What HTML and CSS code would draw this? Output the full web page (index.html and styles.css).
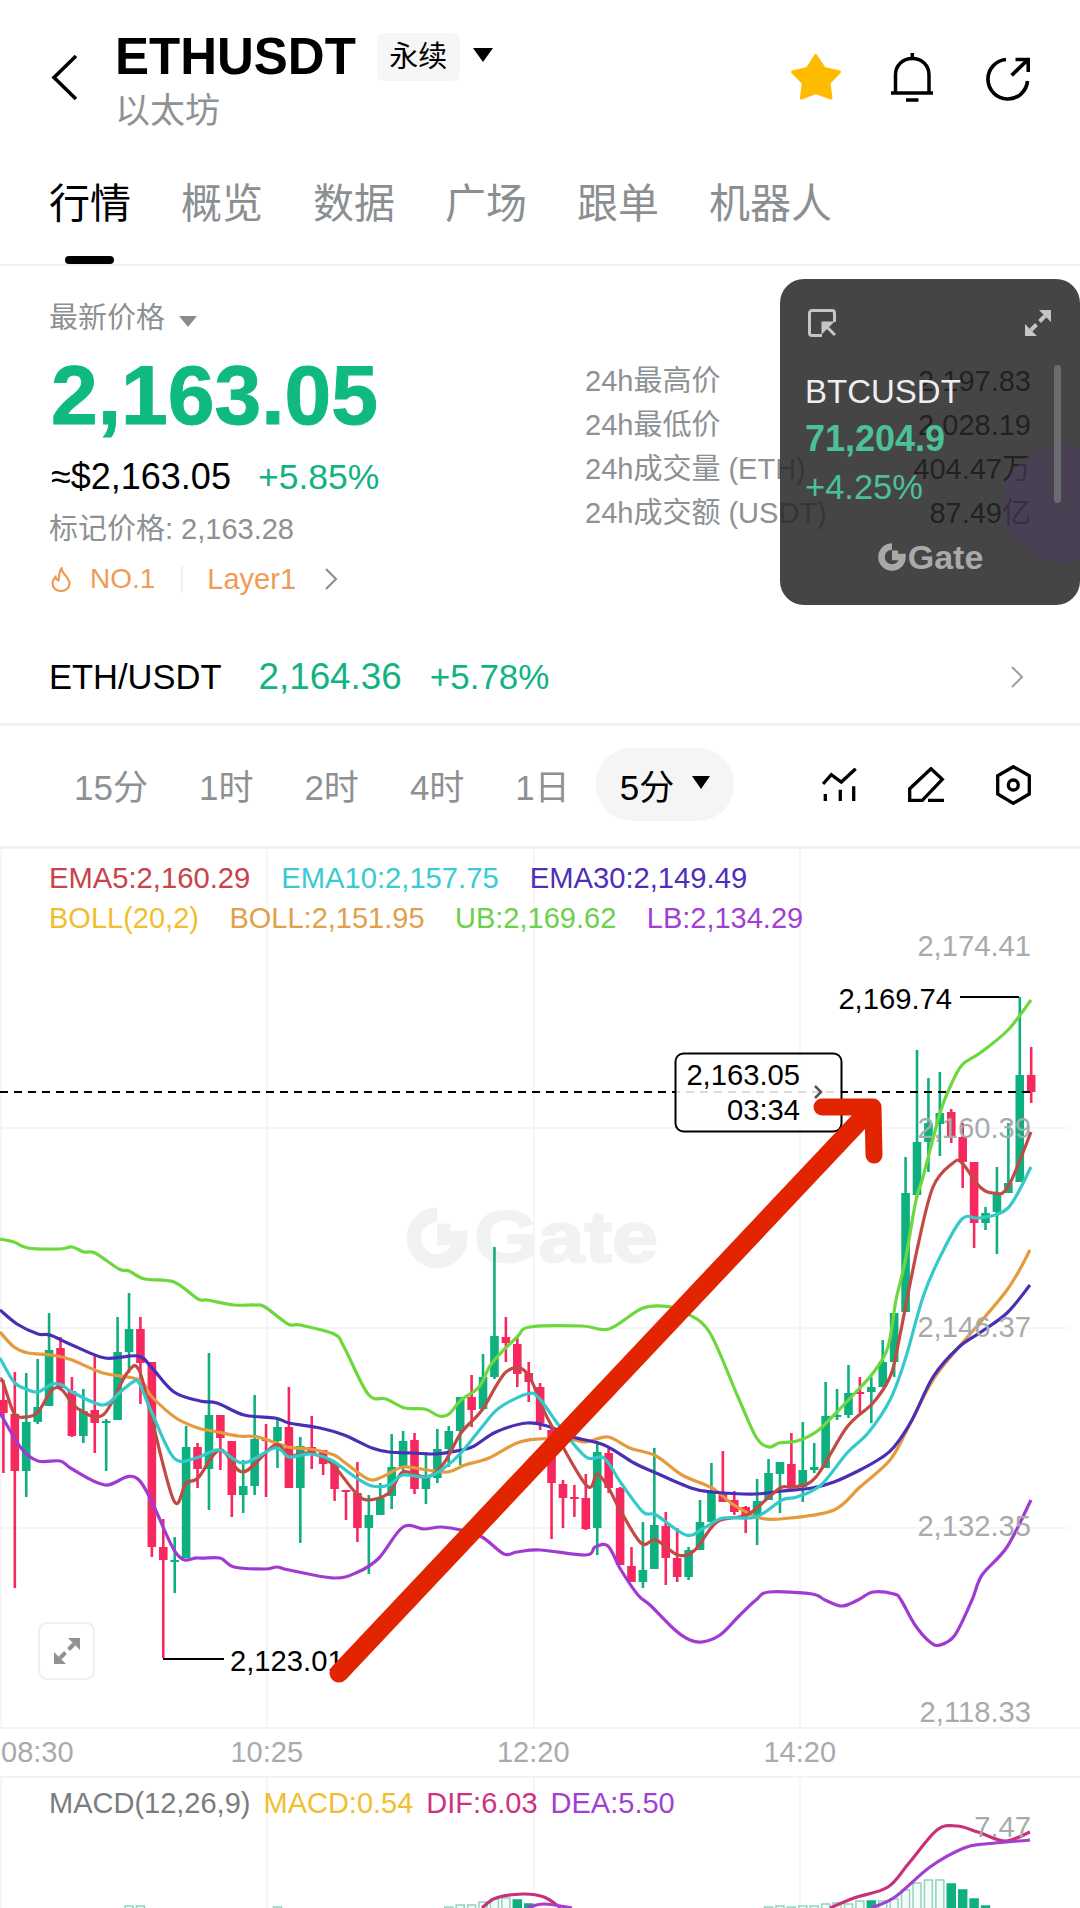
FILE: index.html
```html
<!DOCTYPE html>
<html lang="zh">
<head>
  <meta charset="UTF-8">
  <title>ETHUSDT 永续</title>
  <link rel="stylesheet" href="styles.css">
</head>
<body>

  <svg class="defs" width="0" height="0">
    <symbol id="expand" viewBox="0 0 28 28">
      <path d="M15 1H27V13Z M1 15V27H13Z" fill="currentColor"/>
      <path d="M21 7L15.5 12.5 M7 21L12.5 15.5" stroke="currentColor" stroke-width="4" fill="none"/>
    </symbol>
    <symbol id="gate-mark" viewBox="0 0 56 56">
      <path d="M28 7A21 21 0 1 0 49 28H28" fill="none" stroke="currentColor" stroke-width="13"/>
      <rect x="28" y="15" width="12" height="13" fill="currentColor"/>
    </symbol>
  </svg>

  <!-- Header -->
  <div class="header">
    <svg class="back" viewBox="0 0 30 70"><polyline points="27,23 5,44.5 27,66"/></svg>
    <div class="title">
      <div class="title-row">
        <span class="symbol">ETHUSDT</span>
        <span class="badge">永续</span>
        <span class="caret"></span>
      </div>
      <div class="subtitle">以太坊</div>
    </div>
    <div class="actions">
      <svg class="star" viewBox="0 0 52 49"><polygon points="25.7,2.5 34.3,15.5 49.5,19 39,30 41,45 25.7,39.5 11.5,45 13.3,30 2.5,19 17.3,15.5"/></svg>
      <svg class="bell" viewBox="0 0 42 49">
        <path d="M4.5 40V22C4.5 12 12 5.5 21.3 5.5S38 12 38 22V40"/>
        <path d="M0 40H42M21.3 0V5M15 47H27.5"/>
      </svg>
      <svg class="share" viewBox="0 0 44 44">
        <path d="M20 2.5A19.8 19.8 0 1 0 41.5 24"/>
        <path d="M25.7 18.3L41.5 3M29.5 2.5H42.3V15"/>
      </svg>
    </div>
  </div>

  <!-- Tabs -->
  <div class="tabs">
    <div class="tab active">行情</div>
    <div class="tab">概览</div>
    <div class="tab">数据</div>
    <div class="tab">广场</div>
    <div class="tab">跟单</div>
    <div class="tab">机器人</div>
  </div>

  <!-- Price summary -->
  <div class="summary">
    <div class="price-col">
      <div class="price-label">最新价格 <span class="caret small"></span></div>
      <div class="price">2,163.05</div>
      <div class="fiat-row"><span class="fiat">≈$2,163.05</span><span class="up">+5.85%</span></div>
      <div class="mark">标记价格: 2,163.28</div>
      <div class="tags">
        <svg class="flame" viewBox="0 0 20 25"><path d="M10.5 1.5C11 7 18.5 10 18.5 16.5A8.5 7.5 0 0 1 1.5 16.5C1.5 13.5 3 11.5 4.5 10C5 12 6 13 7.5 13.500C8 9 8 5 10.500 1.500Z"/></svg>
        <span class="tag">NO.1</span>
        <span class="tag-sep"></span>
        <span class="tag">Layer1</span>
        <svg class="tag-arrow" viewBox="0 0 14 22"><polyline points="2,1 12,11 2,21"/></svg>
      </div>
    </div>
    <div class="stats">
      <div class="stat"><span class="stat-name">24h最高价</span><span class="stat-val">2,197.83</span></div>
      <div class="stat"><span class="stat-name">24h最低价</span><span class="stat-val">2,028.19</span></div>
      <div class="stat"><span class="stat-name">24h成交量 (ETH)</span><span class="stat-val">404.47万</span></div>
      <div class="stat"><span class="stat-name">24h成交额 (USDT)</span><span class="stat-val">87.49亿</span></div>
    </div>

    <!-- Floating mini window -->
    <div class="float-win">
      <div class="float-blob"></div>
      <div class="float-bar"></div>
      <div class="float-icons">
        <svg class="float-icon" viewBox="0 0 28 28">
          <path d="M14 26.500H4A2.500 2.500 0 0 1 1.500 24V4A2.500 2.500 0 0 1 4 1.500H24A2.500 2.500 0 0 1 26.500 4V13" fill="none" stroke="currentColor" stroke-width="3"/>
          <path d="M15 14H23L15 22Z M17 16L27 26" fill="currentColor" stroke="currentColor" stroke-width="3"/>
        </svg>
        <svg class="float-icon"><use href="#expand"/></svg>
      </div>
      <div class="float-sym">BTCUSDT</div>
      <div class="float-price">71,204.9</div>
      <div class="float-chg">+4.25%</div>
      <div class="float-logo">
        <svg class="float-mark"><use href="#gate-mark"/></svg>
        <span>Gate</span>
      </div>
    </div>
  </div>

  <!-- Spot row -->
  <div class="spot">
    <span class="spot-name">ETH/USDT</span>
    <span class="spot-price">2,164.36</span>
    <span class="spot-chg">+5.78%</span>
    <svg class="spot-arrow" viewBox="0 0 14 22"><polyline points="2,1 12,11 2,21"/></svg>
  </div>

  <!-- Period selector -->
  <div class="periods">
    <div class="period">15分</div>
    <div class="period">1时</div>
    <div class="period">2时</div>
    <div class="period">4时</div>
    <div class="period">1日</div>
    <div class="period current">5分<span class="caret"></span></div>
    <div class="tools">
      <svg class="tool t1" viewBox="0 0 36 34">
        <path d="M1 16L9.300 6.700 19.300 14 33.700 .7M3.300 26V33M18.300 21.700V33M31.700 18.300V33"/>
      </svg>
      <svg class="tool t2" viewBox="0 0 37 35">
        <path d="M1.700 33.300V21.700L23 1.700 34.300 12.300 14.300 33.300ZM20 33.300H36"/>
      </svg>
      <svg class="tool t3" viewBox="0 0 35 40">
        <polygon points="17.300,1.700 33.300,10.700 33.300,29 17.300,38.300 1.700,29 1.700,10.700"/>
        <circle cx="17.300" cy="20" r="5"/>
      </svg>
    </div>
  </div>

  <!-- Candle chart -->
  <div class="chart">
    <svg class="chart-svg" viewBox="0 849 1080 878">
      <g class="watermark">
        <use href="#gate-mark" x="406" y="1207" width="62" height="62"/>
        <text x="474" y="1262" class="watermark-text" textLength="184" lengthAdjust="spacingAndGlyphs">Gate</text>
      </g>
      <path class="grid" d="M1 849V1727M267 849V1727M534 849V1727M800 849V1727M0 1128H1068M0 1328H1068M0 1528H1068"/>
      <g id="candles"></g>
      <g id="lines"></g>
      <path class="low-lead" d="M163 1659H224"/>
      <text x="230" y="1671" class="tag-black">2,123.01</text>
      <path class="low-lead" d="M960 997H1019"/>
      <text x="952" y="1009" class="tag-black end">2,169.74</text>
      <text x="1031" y="956" class="axis end">2,174.41</text>
      <text x="1031" y="1138" class="axis end">2,160.39</text>
      <text x="1031" y="1337" class="axis end">2,146.37</text>
      <text x="1031" y="1536" class="axis end">2,132.35</text>
      <text x="1031" y="1722" class="axis end">2,118.33</text>
      <path class="last-line" d="M0 1092H1031"/>
      <rect x="675.500" y="1053.500" width="166" height="78" rx="8" class="price-box"/>
      <text x="800" y="1085" class="tag-black end">2,163.05</text>
      <text x="800" y="1120" class="tag-black end">03:34</text>
      <polyline points="815,1086 821,1092 815,1098" class="box-arrow"/>
      <path class="arrow" d="M339 1673L868 1112"/>
      <path class="arrow-head" d="M822 1107H873L874 1155"/>
    </svg>
    <div class="legend">
      <div class="legend-row">
        <span class="c-ema5">EMA5:2,160.29</span>
        <span class="c-ema10">EMA10:2,157.75</span>
        <span class="c-ema30">EMA30:2,149.49</span>
      </div>
      <div class="legend-row second">
        <span class="c-yellow">BOLL(20,2)</span>
        <span class="c-boll">BOLL:2,151.95</span>
        <span class="c-ub">UB:2,169.62</span>
        <span class="c-lb">LB:2,134.29</span>
      </div>
    </div>
    <div class="full-btn"><svg class="full-icon"><use href="#expand"/></svg></div>
  </div>

  <!-- Time axis -->
  <div class="times">
    <span class="first">08:30</span>
    <span>10:25</span>
    <span>12:20</span>
    <span>14:20</span>
  </div>

  <!-- MACD -->
  <div class="macd">
    <svg class="chart-svg" viewBox="0 1778 1080 130">
      <path class="grid" d="M1 1778V1908M267 1778V1908M534 1778V1908M800 1778V1908"/>
      <g id="hist"></g>
      <g id="macd-lines"></g>
      <text x="1031" y="1837" class="axis end">7.47</text>
    </svg>
    <div class="macd-legend">
      <span class="c-gray">MACD(12,26,9)</span>
      <span class="c-yellow">MACD:0.54</span>
      <span class="c-dif">DIF:6.03</span>
      <span class="c-lb">DEA:5.50</span>
    </div>
  </div>

  <script src="script.js"></script>
</body>
</html>
```

FILE: styles.css
```css
* {
  box-sizing: border-box;
}

body {
  margin: 0;
  width: 1080px;
  height: 1908px;
  overflow: hidden;
  background: #fff;
  color: #000;
  font-family: "Liberation Sans", "Noto Sans CJK SC", sans-serif;
}

.defs {
  position: absolute;
}

.caret {
  display: inline-block;
  width: 0;
  height: 0;
  border-left: 10px solid transparent;
  border-right: 10px solid transparent;
  border-top: 14px solid #000;
}

.caret.small {
  border-left-width: 9px;
  border-right-width: 9px;
  border-top: 11px solid #888c8f;
  margin-left: 6px;
  vertical-align: 1px;
}

/* header */
.header {
  display: flex;
  align-items: flex-start;
  padding: 33px 50px 0 49px;
  height: 131px;
}

.back {
  width: 30px;
  height: 70px;
  margin-right: 36px;
  fill: none;
  stroke: #000;
  stroke-width: 3.6;
}

.title-row {
  display: flex;
  align-items: center;
  height: 48px;
}

.symbol {
  font-size: 51px;
  font-weight: bold;
  line-height: 48px;
}

.badge {
  margin-left: 21px;
  width: 83px;
  height: 48px;
  line-height: 48px;
  text-align: center;
  font-size: 29px;
  background: #f6f6f6;
  border-radius: 6px;
}

.title-row .caret {
  margin-left: 13px;
  margin-bottom: 4px;
}

.subtitle {
  margin-top: 10px;
  line-height: 40px;
  font-size: 35px;
  color: #8e9295;
}

.actions {
  display: flex;
  margin-left: auto;
  margin-top: 20px;
}

.star {
  width: 52px;
  height: 49px;
  fill: #ffbb00;
  stroke: #ffbb00;
  stroke-width: 3;
  stroke-linejoin: round;
}

.bell {
  width: 42px;
  height: 49px;
  margin-left: 49px;
  fill: none;
  stroke: #000;
  stroke-width: 3.5;
}

.share {
  width: 44px;
  height: 44px;
  margin-left: 53px;
  margin-top: 4px;
  fill: none;
  stroke: #000;
  stroke-width: 3.7;
}

/* tabs */
.tabs {
  position: relative;
  display: flex;
  gap: 50px;
  height: 135px;
  padding: 51px 49px 0;
  border-bottom: 2px solid #f3f3f3;
}

.tab {
  font-size: 41px;
  line-height: 44px;
  color: #8b8f92;
}

.tab.active {
  color: #000;
}

.tab.active::after {
  content: "";
  position: absolute;
  left: 65px;
  bottom: 0;
  width: 49px;
  height: 8px;
  border-radius: 4px;
  background: #000;
}

/* summary */
.summary {
  position: relative;
  display: flex;
  height: 365px;
  padding-left: 49px;
}

.price-col {
  width: 536px;
  padding-top: 34px;
}

.price-label {
  line-height: 36px;
  font-size: 29px;
  color: #8d9194;
}

.price {
  margin-top: 17px;
  margin-left: 2px;
  font-size: 84px;
  line-height: 84px;
  font-weight: bold;
  color: #10b981;
  -webkit-text-stroke: 1px #10b981;
}

.fiat-row {
  display: flex;
  gap: 27px;
  margin-top: 20px;
  margin-left: 2px;
  font-size: 36px;
  line-height: 40px;
}

.up {
  font-size: 35.500px;
  color: #12b283;
}

.mark {
  margin-top: 14px;
  line-height: 36px;
  font-size: 29px;
  color: #8d9194;
}

.tags {
  display: flex;
  align-items: center;
  height: 36px;
  margin-top: 14px;
  margin-left: 2px;
}

.flame {
  width: 20px;
  height: 25px;
  fill: none;
  stroke: #ee9b57;
  stroke-width: 2.2;
}

.tag {
  margin-left: 19px;
  font-size: 28px;
  color: #ee9b57;
}

.tag + .tag-sep + .tag {
  font-size: 29px;
}

.tag-sep {
  width: 2px;
  height: 27px;
  margin-left: 26px;
  margin-right: 5px;
  background: #f0f0f0;
}

.tag-arrow {
  width: 14px;
  height: 22px;
  margin-left: 28px;
  fill: none;
  stroke: #8d9194;
  stroke-width: 2.2;
}

.stats {
  width: 446px;
  padding-top: 93px;
}

.stat {
  display: flex;
  justify-content: space-between;
  height: 44px;
  line-height: 44px;
  font-size: 29px;
}

.stat-name {
  color: #8d9194;
}

.stat-val {
  color: #000;
}

/* floating window */
.float-win {
  position: absolute;
  top: 13px;
  right: 0;
  width: 300px;
  height: 326px;
  padding: 30px 28px 0 25px;
  border-radius: 24px;
  overflow: hidden;
  background: rgba(38, 39, 40, 0.86);
  color: #eee;
}

.float-blob {
  position: absolute;
  top: 166px;
  right: -44px;
  width: 122px;
  height: 118px;
  border-radius: 50%;
  background: rgba(78, 62, 96, 0.5);
}

.float-bar {
  position: absolute;
  top: 86px;
  left: 274px;
  width: 7px;
  height: 138px;
  border-radius: 4px;
  background: #6b6c6e;
}

.float-icons {
  display: flex;
  justify-content: space-between;
  height: 28px;
  padding-left: 3px;
}

.float-icon {
  width: 28px;
  height: 28px;
  color: #c4c5c5;
}

.float-sym {
  margin-top: 36px;
  font-size: 33px;
  line-height: 38px;
}

.float-price {
  margin-top: 8px;
  font-size: 36px;
  font-weight: bold;
  line-height: 40px;
  color: #4cc096;
}

.float-chg {
  margin-top: 8px;
  font-size: 34.5px;
  line-height: 40px;
  color: #4cc096;
}

.float-logo {
  display: flex;
  align-items: center;
  justify-content: center;
  gap: 2px;
  height: 28px;
  margin-top: 36px;
  margin-left: 4px;
  font-size: 34px;
  font-weight: bold;
  color: #a9a9a9;
}

.float-mark {
  width: 28px;
  height: 28px;
}

/* spot */
.spot {
  display: flex;
  align-items: center;
  height: 95px;
  padding: 0 56px 0 49px;
  border-bottom: 3px solid #f3f3f3;
}

.spot-name {
  font-size: 34.500px;
}

.spot-price {
  margin-left: 37px;
  font-size: 36.800px;
  color: #12b283;
}

.spot-chg {
  margin-left: 28px;
  font-size: 35px;
  color: #12b283;
}

.spot-arrow {
  width: 14px;
  height: 22px;
  margin-left: auto;
  fill: none;
  stroke: #9ea2a4;
  stroke-width: 2.2;
}

/* periods */
.periods {
  display: flex;
  align-items: center;
  gap: 51px;
  height: 123px;
  padding: 0 49px 3px 74px;
  border-bottom: 3px solid #f3f3f3;
}

.period {
  font-size: 35px;
  color: #8d9194;
}

.period.current {
  display: flex;
  align-items: center;
  gap: 18px;
  height: 73px;
  margin-left: -25px;
  padding: 0 24px;
  border-radius: 36px;
  background: #f5f5f5;
  color: #000;
}

.period.current .caret {
  border-left-width: 9px;
  border-right-width: 9px;
  border-top-width: 13px;
  margin-bottom: 4px;
}

.tools {
  display: flex;
  align-items: center;
  margin-left: auto;
}

.tool {
  fill: none;
  stroke: #000;
  stroke-width: 3.3;
}

.t1 {
  width: 36px;
  height: 34px;
}

.t2 {
  width: 37px;
  height: 35px;
  margin-left: 50px;
}

.t3 {
  width: 35px;
  height: 40px;
  margin-left: 51px;
}

/* chart */
.chart {
  position: relative;
  height: 878px;
  padding-top: 11px;
}

.chart-svg {
  position: absolute;
  left: 0;
  top: 0;
  width: 100%;
  height: 100%;
}

.chart-svg text {
  font-family: "Liberation Sans", sans-serif;
}

.grid {
  fill: none;
  stroke: #f3f4f4;
  stroke-width: 1.5;
}

.watermark {
  color: #f1f3f3;
}

.watermark-text {
  font-size: 72px;
  font-weight: bold;
  fill: #f1f3f3;
  stroke: #f1f3f3;
  stroke-width: 2;
}

.axis {
  font-size: 29.200px;
  fill: #a8abad;
}

.tag-black {
  font-size: 29.200px;
  fill: #000;
}

.end {
  text-anchor: end;
}

.low-lead {
  fill: none;
  stroke: #000;
  stroke-width: 2;
}

.last-line {
  fill: none;
  stroke: #000;
  stroke-width: 2;
  stroke-dasharray: 8 6;
}

.price-box {
  fill: rgba(255, 255, 255, 0.85);
  stroke: #000;
  stroke-width: 2;
}

.box-arrow {
  fill: none;
  stroke: #555;
  stroke-width: 2.5;
}

.arrow {
  fill: none;
  stroke: #e22400;
  stroke-width: 19;
  stroke-linecap: round;
}

.arrow-head {
  fill: none;
  stroke: #e22400;
  stroke-width: 17;
  stroke-linecap: round;
  stroke-linejoin: round;
}

.legend {
  position: relative;
}

.legend-row {
  display: flex;
  gap: 31px;
  padding-left: 49px;
  margin-bottom: 3.500px;
  font-size: 29.200px;
  line-height: 36px;
}

.legend-row.second {
  gap: 30.500px;
  font-size: 29px;
}

.c-ema5 { color: #c9434b; }
.c-ema10 { color: #38cbd1; }
.c-ema30 { color: #4f2fb8; }
.c-yellow { color: #f0be2e; }
.c-boll { color: #e2a04a; }
.c-ub { color: #6cd04a; }
.c-lb { color: #a33fd0; }
.c-dif { color: #d0307f; }
.c-gray { color: #7a7d80; }

.full-btn {
  position: absolute;
  left: 38px;
  top: 773px;
  display: flex;
  align-items: center;
  justify-content: center;
  width: 57px;
  height: 58px;
  border: 2px solid #efefef;
  border-radius: 9px;
  background: #fff;
}

.full-icon {
  width: 28px;
  height: 28px;
  color: #8f9193;
}

/* time axis */
.times {
  display: grid;
  grid-template-columns: 133.500px repeat(3, 266.500px);
  height: 51px;
  border-top: 2px solid #f3f3f3;
  border-bottom: 2px solid #f3f3f3;
  font-size: 29px;
  line-height: 47px;
  color: #a8abad;
  text-align: center;
}

.times .first {
  padding-left: 1px;
  text-align: left;
}

/* macd */
.macd {
  position: relative;
  height: 130px;
  padding-top: 7px;
}

.macd-legend {
  position: relative;
  display: flex;
  gap: 13px;
  padding-left: 49px;
  font-size: 29px;
  line-height: 36px;
}
```

FILE: script.js
```js
// candles: [wick top, wick bottom, body top, body bottom, 0 = up / 1 = down]
const candles = [
  [1380,1473,1400,1413,1],[1372,1588,1414,1471,1],[1373,1497,1422,1471,0],[1359,1424,1407,1422,0],
  [1313,1406,1350,1406,0],[1337,1387,1348,1388,1],[1377,1437,1391,1436,1],[1389,1443,1411,1436,0],
  [1355,1453,1410,1423,1],[1419,1471,1421,1422,0],[1317,1420,1352,1420,0],[1293,1373,1329,1352,0],
  [1317,1404,1329,1363,1],[1362,1557,1362,1547,1],[1519,1658,1547,1560,1],[1537,1593,1560,1561,0],
  [1426,1558,1447,1558,0],[1443,1488,1447,1469,1],[1353,1510,1415,1469,0],[1415,1470,1415,1438,1],
  [1441,1517,1441,1495,1],[1460,1513,1486,1495,0],[1395,1495,1439,1486,0],[1424,1497,1439,1440,1],
  [1418,1468,1427,1441,0],[1387,1488,1427,1488,1],[1437,1543,1446,1488,0],[1416,1469,1447,1453,1],
  [1450,1475,1450,1464,1],[1463,1501,1465,1489,1],[1490,1520,1490,1492,1],[1462,1542,1493,1528,1],
  [1495,1574,1515,1528,0],[1483,1515,1498,1515,0],[1434,1509,1467,1496,0],[1431,1472,1441,1467,0],
  [1433,1494,1440,1489,1],[1452,1504,1478,1489,0],[1429,1483,1449,1478,0],[1426,1467,1431,1449,0],
  [1397,1465,1397,1431,0],[1375,1427,1397,1410,1],[1354,1410,1377,1409,0],[1247,1379,1336,1377,0],
  [1317,1362,1337,1343,1],[1338,1387,1344,1374,1],[1362,1402,1373,1382,1],[1383,1430,1387,1423,1],
  [1425,1539,1430,1483,1],[1480,1528,1484,1498,1],[1485,1517,1497,1499,1],[1474,1530,1498,1529,1],
  [1441,1555,1452,1528,0],[1447,1493,1453,1488,1],[1487,1565,1488,1565,1],[1547,1582,1566,1582,1],
  [1522,1588,1570,1582,0],[1448,1569,1525,1569,0],[1512,1585,1526,1558,1],[1528,1582,1558,1577,1],
  [1547,1580,1550,1577,0],[1500,1550,1522,1550,0],[1463,1522,1493,1522,0],[1451,1502,1492,1502,1],
  [1491,1515,1500,1512,1],[1506,1533,1507,1515,1],[1479,1545,1501,1516,0],[1459,1500,1473,1500,0],
  [1462,1513,1462,1474,0],[1433,1488,1464,1488,1],[1422,1502,1470,1487,0],[1443,1473,1467,1470,0],
  [1382,1468,1416,1468,0],[1389,1420,1415,1417,0],[1365,1418,1393,1415,0],[1377,1413,1392,1393,1],
  [1377,1423,1387,1392,0],[1340,1387,1362,1387,0],[1313,1377,1313,1362,0],[1157,1312,1193,1312,0],
  [1050,1198,1142,1195,0],[1078,1172,1123,1142,0],[1072,1156,1113,1124,0],[1109,1143,1112,1137,1],
  [1123,1188,1137,1162,1],[1162,1248,1162,1223,1],[1207,1230,1213,1223,0],[1167,1254,1193,1212,0],
  [1123,1193,1183,1193,0],[997,1182,1075,1182,0],[1047,1103,1075,1092,1]
];

const lines = [
  { color: '#a03bd1', pts: '0,1413 21,1448 38,1461 60,1461 72,1469 105,1485 139,1480 176,1553 198,1558 220,1558 234,1567 265,1569 277,1567 289,1570 334,1578 358,1572 379,1558 403,1527 424,1529 441,1527 461,1530 482,1537 504,1554 517,1552 540,1550 586,1555 595,1547 608,1546 621,1570 638,1595 650,1605 675,1630 690,1640 702,1642 720,1635 740,1615 756,1600 769,1592 812,1594 825,1600 842,1606 858,1600 873,1592 894,1594 901,1600 915,1625 930,1642 940,1645 955,1635 972,1600 982,1575 1007,1547 1031,1500' },
  { color: '#e59a3c', pts: '0,1332 14,1347 28,1353 52,1355 72,1360 103,1373 139,1380 152,1397 176,1418 198,1428 213,1431 238,1436 258,1437 288,1447 310,1449 334,1455 344,1462 368,1479 382,1477 403,1467 427,1470 448,1472 465,1465 489,1458 517,1443 539,1439 569,1439 586,1442 608,1437 630,1448 656,1456 682,1475 712,1488 734,1505 760,1518 790,1518 834,1510 860,1487 890,1460 907,1430 933,1380 959,1347 1007,1290 1030,1250' },
  { color: '#4a2eb5', pts: '0,1310 17,1324 38,1334 50,1335 72,1345 105,1358 138,1356 152,1368 174,1392 200,1401 217,1403 244,1415 275,1418 289,1423 320,1428 344,1435 372,1448 389,1452 413,1453 436,1454 451,1452 472,1447 496,1432 527,1423 550,1427 573,1437 604,1445 634,1463 656,1473 691,1488 712,1492 756,1494 782,1491 812,1488 834,1482 860,1470 881,1458 894,1447 912,1420 933,1377 959,1347 981,1332 1007,1313 1030,1285' },
  { color: '#6cd83b', pts: '0,1239 14,1242 28,1248 59,1249 72,1247 84,1252 95,1253 119,1269 129,1271 145,1279 174,1282 198,1299 207,1300 234,1305 255,1305 265,1307 288,1324 300,1325 334,1334 344,1347 368,1394 386,1399 405,1408 425,1409 439,1416 449,1414 461,1400 479,1387 492,1363 517,1337 530,1327 582,1326 609,1329 643,1308 671,1307 688,1314 710,1333 738,1397 756,1437 769,1447 779,1443 797,1441 816,1432 834,1415 855,1393 873,1373 888,1347 896,1300 905,1262 916,1200 923,1177 940,1113 950,1087 962,1065 980,1053 1008,1030 1031,1000' },
  { color: '#c24a43', pts: '0,1380 3,1382 14,1413 26,1417 38,1412 52,1390 62,1390 77,1408 103,1415 127,1373 139,1370 152,1420 174,1501 186,1483 198,1478 220,1450 243,1472 275,1445 289,1456 310,1453 331,1463 355,1492 368,1500 389,1493 403,1472 427,1477 444,1463 461,1433 482,1410 506,1372 527,1373 547,1417 586,1485 597,1474 608,1487 619,1508 641,1543 656,1540 678,1555 695,1550 717,1522 747,1515 769,1497 782,1487 795,1487 816,1477 847,1427 873,1403 890,1377 897,1350 917,1250 933,1187 953,1163 962,1163 980,1187 993,1193 1008,1187 1031,1132' },
  { color: '#36c9cc', pts: '0,1358 14,1382 26,1389 38,1392 52,1384 62,1385 72,1392 103,1405 120,1392 133,1382 139,1383 152,1413 174,1458 196,1458 219,1450 243,1463 275,1448 289,1457 310,1454 331,1460 355,1477 372,1486 389,1485 403,1475 427,1477 444,1468 461,1453 482,1427 499,1408 527,1394 539,1398 560,1427 586,1457 604,1458 621,1483 643,1512 656,1515 686,1535 704,1528 723,1518 756,1517 782,1500 797,1497 821,1485 847,1453 868,1433 890,1400 905,1360 923,1297 940,1257 962,1219 980,1218 1008,1208 1031,1167' }
];

const macdLines = [
  { color: '#c9307a', pts: '482,1908 496,1898 523,1894 544,1897 561,1908' },
  { color: '#a33fd0', pts: '527,1908 544,1904 572,1908' },
  { color: '#c9307a', pts: '830,1908 854,1898 888,1887 909,1863 937,1830 957,1826 978,1832 1005,1841 1030,1832' },
  { color: '#a33fd0', pts: '871,1908 895,1897 930,1867 964,1848 985,1844 1030,1840' }
];

// histogram: [candle index, bar top, solid?]
const hist = [
  [11,1906],[12,1906],[24,1907],[39,1907],[40,1905],[41,1905],[42,1902],[43,1899],[44,1898],[45,1900,1],[46,1904,1],
  [67,1907],[68,1906],[69,1907],[70,1906],[71,1906],[72,1904],[73,1903],[74,1904],[75,1901],[76,1901,1],[77,1901],
  [78,1899],[79,1890],[80,1883],[81,1880],[82,1880],[83,1884,1],[84,1890,1],[85,1899,1],[86,1906,1]
];

const GREEN = '#0fb07f';
const RED = '#f6285e';
const candleX = i => 3.4 + i * 11.42;

let html = '';
candles.forEach((c, i) => {
  const x = candleX(i);
  const color = c[4] ? RED : GREEN;
  html += `<rect x="${x - 1.3}" y="${c[0]}" width="2.6" height="${c[1] - c[0]}" fill="${color}"/>`;
  html += `<rect x="${x - 4.3}" y="${c[2]}" width="8.6" height="${Math.max(c[3] - c[2], 2)}" fill="${color}"/>`;
});
document.getElementById('candles').innerHTML = html;

// catmull-rom through the points so the curves don't look polygonal
function smoothPath(ptsStr) {
  const p = ptsStr.split(' ').map(s => s.split(',').map(Number));
  let d = `M${p[0][0]} ${p[0][1]}`;
  for (let i = 0; i < p.length - 1; i++) {
    const a = p[Math.max(i - 1, 0)], b = p[i], c = p[i + 1], e = p[Math.min(i + 2, p.length - 1)];
    const c1x = b[0] + (c[0] - a[0]) / 6, c1y = b[1] + (c[1] - a[1]) / 6;
    const c2x = c[0] - (e[0] - b[0]) / 6, c2y = c[1] - (e[1] - b[1]) / 6;
    d += `C${c1x.toFixed(1)} ${c1y.toFixed(1)} ${c2x.toFixed(1)} ${c2y.toFixed(1)} ${c[0]} ${c[1]}`;
  }
  return d;
}

function drawLines(list, width) {
  return list.map(l => `<path d="${smoothPath(l.pts)}" fill="none" stroke="${l.color}" stroke-width="${width}"/>`).join('');
}
document.getElementById('lines').innerHTML = drawLines(lines, 3.2);
document.getElementById('macd-lines').innerHTML = drawLines(macdLines, 3.2);

document.getElementById('hist').innerHTML = hist.map(h => {
  const fill = h[2] ? GREEN : '#f3fbf8';
  const stroke = h[2] ? GREEN : '#8fd3bd';
  return `<rect x="${candleX(h[0]) - 4}" y="${h[1]}" width="8" height="${1912 - h[1]}" fill="${fill}" stroke="${stroke}" stroke-width="1.5"/>`;
}).join('');
```
